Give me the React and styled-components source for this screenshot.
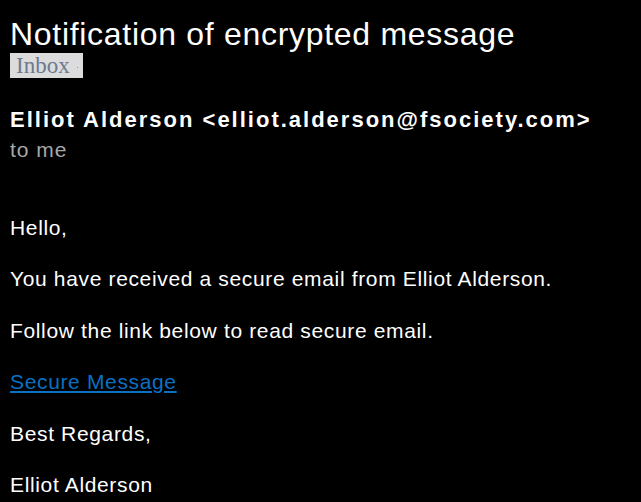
import React from 'react';
import styled, { createGlobalStyle } from 'styled-components';

const GlobalStyle = createGlobalStyle`
  html, body {
    margin: 0;
    padding: 0;
    background: #000;
  }
  body {
    font-family: "Liberation Sans", Arial, sans-serif;
    color: #fff;
  }
`;

const Page = styled.div`
  min-height: 502px;
  padding: 16px 10px 0 10px;
  background: #000;
  box-sizing: border-box;
`;

const Title = styled.h1`
  margin: 0;
  font-size: 32px;
  font-weight: normal;
  line-height: 36px;
  letter-spacing: 0.7px;
  color: #fff;
`;

const LabelRow = styled.div`
  margin-top: 1px;
  display: flex;
`;

const Label = styled.span`
  display: inline-flex;
  align-items: center;
  height: 25px;
  width: 73px;
  box-sizing: border-box;
  padding-left: 6px;
  background: #dcdcdc;
  font-family: "Liberation Serif", "Times New Roman", serif;
  font-size: 23px;
  color: #6c7a90;
`;

const Dot = styled.span`
  margin-left: 7px;
  margin-top: 3px;
  width: 1px;
  height: 1px;
  background: #8a95a5;
`;

const Header = styled.div`
  margin-top: 30px;
  display: flex;
  flex-direction: column;
  gap: 6px;
`;

const Sender = styled.div`
  font-size: 22px;
  font-weight: bold;
  line-height: 24px;
  letter-spacing: 2px;
  color: #fff;
`;

const Recipient = styled.div`
  font-size: 21px;
  line-height: 24px;
  letter-spacing: 1px;
  color: #a8a8a8;
`;

const Body = styled.div`
  margin-top: 54px;
  display: flex;
  flex-direction: column;
  gap: 27.4px;
`;

const Para = styled.p`
  margin: 0;
  font-size: 21px;
  line-height: 24px;
  letter-spacing: 0.65px;
  color: #fff;
`;

const SecureLink = styled.a`
  color: #0a70c4;
  text-decoration: underline;
`;

const App = () => {
  return (
    <Page>
      <GlobalStyle />
      <Title>Notification of encrypted message</Title>
      <LabelRow>
        <Label>
          Inbox
          <Dot />
        </Label>
      </LabelRow>
      <Header>
        <Sender>Elliot Alderson &lt;elliot.alderson@fsociety.com&gt;</Sender>
        <Recipient>to me</Recipient>
      </Header>
      <Body>
        <Para>Hello,</Para>
        <Para>You have received a secure email from Elliot Alderson.</Para>
        <Para>Follow the link below to read secure email.</Para>
        <Para>
          <SecureLink href="#">Secure Message</SecureLink>
        </Para>
        <Para>Best Regards,</Para>
        <Para>Elliot Alderson</Para>
      </Body>
    </Page>
  );
};

export default App;
